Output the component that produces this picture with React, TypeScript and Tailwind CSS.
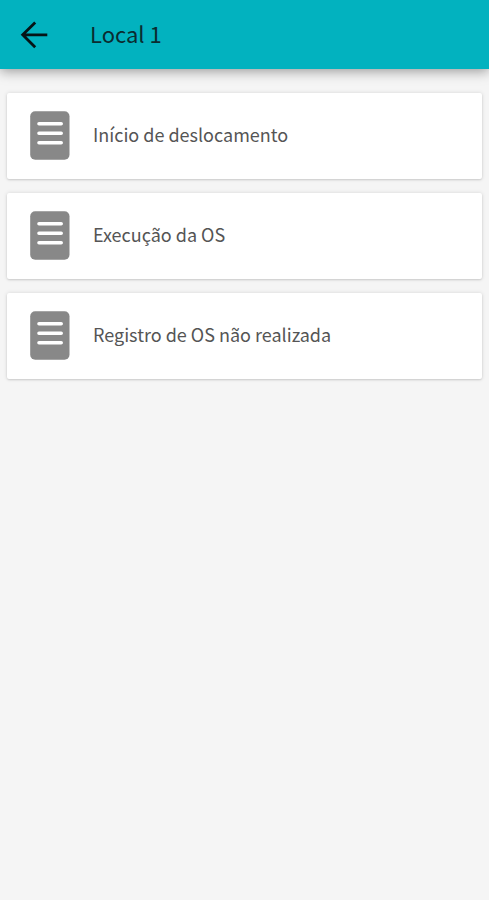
import React from "react"

const forms = [
  { id: 1, title: "Início de deslocamento" },
  { id: 2, title: "Execução da OS" },
  { id: 3, title: "Registro de OS não realizada" },
]

function BackArrow() {
  return (
    <svg width="28" height="28" viewBox="0 0 28 28" fill="none" stroke="#061416" strokeWidth="2.8">
      <path d="M27.3 13.8H3M15.2 1.5L2.7 13.8l12.5 12.5" />
    </svg>
  )
}

function FormIcon() {
  return (
    <svg width="40" height="49" viewBox="0 0 40 49" className="shrink-0">
      <rect x="0.2" y="0.3" width="39.3" height="48.4" rx="5" fill="#888888" />
      <g stroke="#ffffff" strokeWidth="3.6" strokeLinecap="round">
        <path d="M9 12.8h22.2M9 22.3h22.2M9 31.8h22.2" />
      </g>
    </svg>
  )
}

interface FormCardProps {
  title: string
}

function FormCard({ title }: FormCardProps) {
  return (
    <button className="flex h-[86px] w-full items-center rounded-[2px] bg-white pb-[2px] pl-[23px] text-left shadow-[0_0_4px_rgba(0,0,0,0.12),0_1px_2px_rgba(0,0,0,0.12)]">
      <FormIcon />
      <span className="ml-[23px] whitespace-nowrap pb-[2px] text-[18px] leading-[28px] text-[#555555]">{title}</span>
    </button>
  )
}

export default function App() {
  return (
    <div className="min-h-screen bg-[#f5f5f5] font-['Noto_Sans_CJK_SC','Noto_Sans',sans-serif]">
      <header className="flex h-[69px] items-center bg-[#02b2bf] pl-5 shadow-[0_2px_12px_rgba(0,0,0,0.4)]">
        <button aria-label="Voltar">
          <BackArrow />
        </button>
        <h1 className="ml-[42px] pb-[3px] text-[22px] leading-[32px] text-[#0b2c30]">Local 1</h1>
      </header>
      <main className="flex flex-col gap-[14px] px-[7px] pt-6">
        {forms.map((form) => (
          <FormCard key={form.id} title={form.title} />
        ))}
      </main>
    </div>
  )
}
